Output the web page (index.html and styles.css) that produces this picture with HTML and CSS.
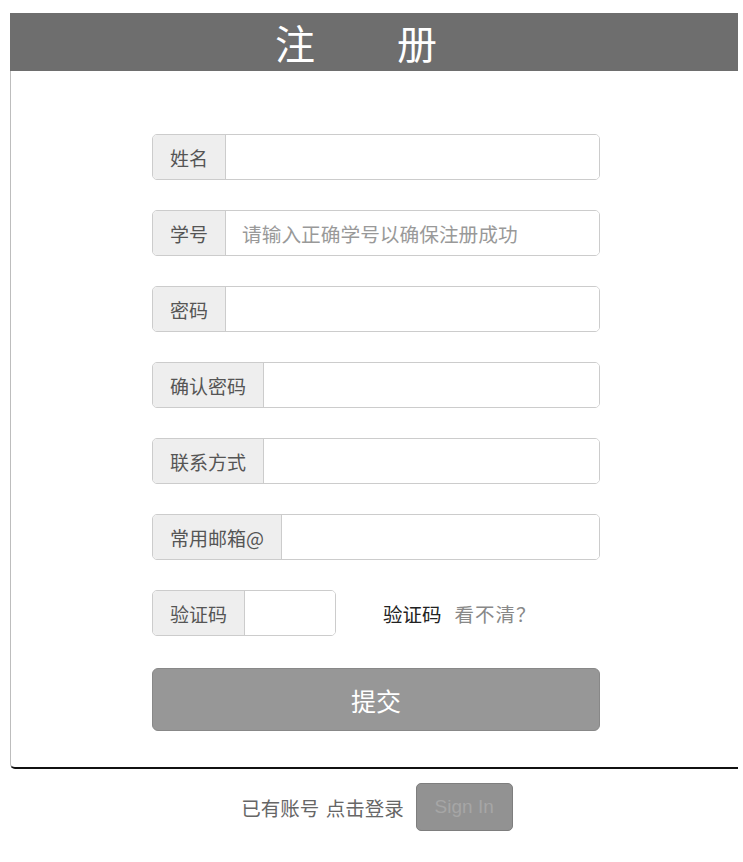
FILE: index.html
```html
<!DOCTYPE html>
<html lang="zh-CN">
<head>
<meta charset="utf-8">
<title>注册</title>
<link rel="stylesheet" href="styles.css">
</head>
<body>
<div class="page">
  <div class="header"><span class="hchar">注</span><span class="hchar">册</span></div>
  <div class="card">
    <form class="form">
      <div class="group"><span class="addon">姓名</span><input class="field" type="text"></div>
      <div class="group"><span class="addon">学号</span><input class="field" type="text" placeholder="请输入正确学号以确保注册成功"></div>
      <div class="group"><span class="addon">密码</span><input class="field" type="password"></div>
      <div class="group"><span class="addon">确认密码</span><input class="field" type="password"></div>
      <div class="group"><span class="addon">联系方式</span><input class="field" type="text"></div>
      <div class="group"><span class="addon">常用邮箱@</span><input class="field" type="text"></div>
      <div class="captcha-row">
        <div class="group small"><span class="addon">验证码</span><input class="field" type="text"></div>
        <div class="captcha-text"><span class="code">验证码</span><span class="unclear">看不清？</span></div>
      </div>
      <button class="submit" type="button">提交</button>
    </form>
  </div>
  <div class="footer">
    <span class="have">已有账号 点击登录</span>
    <button class="signin" type="button">Sign In</button>
  </div>
</div>
</body>
</html>
```
FILE: styles.css
```css
* { box-sizing: border-box; }
html, body { margin: 0; padding: 0; background: #fff; }
body { font-family: "Noto Sans CJK SC", "Noto Sans", sans-serif; color: #555; }

.page { padding: 13px 5px 0 10px; }

.header {
  height: 58px;
  background: #6e6e6e;
  display: flex;
  justify-content: center;
  align-items: center;
  gap: 82px;
  padding-right: 36px;
}
.hchar {
  color: #fff;
  font-size: 40px;
  font-weight: 400;
  line-height: 1;
  font-family: "Noto Sans CJK SC", serif;
}

.card {
  background: #fff;
  border-left: 1px solid #bdbdbd;
  border-bottom: 2px solid #111;
  border-bottom-left-radius: 5px;
  padding: 63px 0 36px 141px;
}

.form {
  width: 448px;
  display: flex;
  flex-direction: column;
  gap: 30px;
}

.group {
  display: flex;
  height: 46px;
  border: 1px solid #ccc;
  border-radius: 5px;
  overflow: hidden;
}
.group.small { width: 184px; }

.addon {
  flex: none;
  display: flex;
  align-items: center;
  padding: 0 17px;
  background: #eee;
  border-right: 1px solid #ccc;
  font-size: 19px;
  color: #555;
  white-space: nowrap;
}

.field {
  flex: 1;
  min-width: 0;
  border: 0;
  outline: none;
  padding: 0 16px;
  font-size: 19.7px;
  font-family: inherit;
  color: #555;
  background: #fff;
}
.field::placeholder { color: #999; }

.captcha-row {
  display: flex;
  align-items: center;
}
.captcha-text {
  margin-left: 47px;
  font-size: 19.5px;
  display: flex;
  gap: 13px;
}
.code { color: #222; }
.unclear { color: #888; letter-spacing: 1px; }

.submit {
  margin-top: 2px;
  height: 63px;
  width: 448px;
  background: #979797;
  border: 1px solid #888;
  border-radius: 6px;
  color: #fff;
  font-size: 25px;
  font-family: inherit;
}

.footer {
  margin-top: 14px;
  display: flex;
  justify-content: center;
  align-items: center;
  gap: 12px;
  padding-left: 6px;
}
.have {
  font-size: 19.5px;
  color: #666;
  word-spacing: 2px;
}
.signin {
  width: 97px;
  height: 48px;
  background: #929292;
  border: 1px solid #7e7e7e;
  border-radius: 5px;
  color: #a6a6a6;
  font-size: 19px;
  font-family: "Liberation Sans", sans-serif;
}
```
